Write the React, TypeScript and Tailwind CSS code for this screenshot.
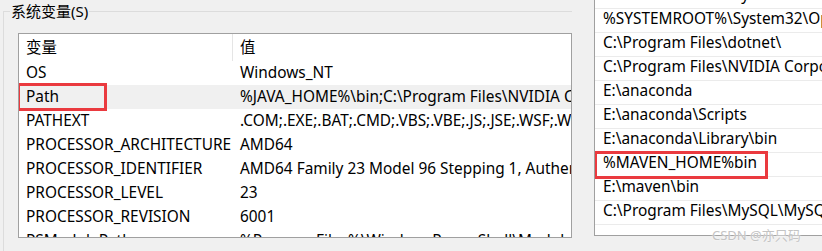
const sysVars: [string, string][] = [
  ['OS', 'Windows_NT'],
  ['Path', '%JAVA_HOME%\\bin;C:\\Program Files\\NVIDIA Corporation\\NVIDIA NvDLISR;%SYSTEMROOT%'],
  ['PATHEXT', '.COM;.EXE;.BAT;.CMD;.VBS;.VBE;.JS;.JSE;.WSF;.WSH;.MSC'],
  ['PROCESSOR_ARCHITECTURE', 'AMD64'],
  ['PROCESSOR_IDENTIFIER', 'AMD64 Family 23 Model 96 Stepping 1, AuthenticAMD'],
  ['PROCESSOR_LEVEL', '23'],
  ['PROCESSOR_REVISION', '6001'],
  ['PSModulePath', '%ProgramFiles%\\WindowsPowerShell\\Modules;%SystemRoot%\\system32'],
];

const pathEntries = [
  '%SYSTEMROOT%\\System32\\WindowsPowerShell\\v1.0\\',
  '%SYSTEMROOT%\\System32\\OpenSSH\\',
  'C:\\Program Files\\dotnet\\',
  'C:\\Program Files\\NVIDIA Corporation\\NVIDIA NvDLISR',
  'E:\\anaconda',
  'E:\\anaconda\\Scripts',
  'E:\\anaconda\\Library\\bin',
  '%MAVEN_HOME%bin',
  'E:\\maven\\bin',
  'C:\\Program Files\\MySQL\\MySQL Server 8.0\\bin',
  '',
];

export default function App() {
  return (
    <div className="relative flex w-[822px] h-[251px] overflow-hidden bg-[#f0f0f0] text-[15.4px] text-black font-['Noto_Sans','Noto_Sans_CJK_SC',sans-serif]">
      {/* system variables dialog */}
      <div className="w-[572px] shrink-0 overflow-hidden pl-[3px]">
        <fieldset className="w-[620px] h-[300px] border border-[#dcdcdc] pl-[6px]">
          <legend className="px-[1px] leading-[22px] text-[15px]">系统变量(S)</legend>
          <div className="mt-[11px] ml-[8px] w-[554px] h-[205px] overflow-hidden border border-[#a0a0a0] bg-white">
            <div className="flex h-[27px] leading-[28px]">
              <div className="w-[214px] shrink-0 pl-[7px] border-r border-[#e5e5e5]">变量</div>
              <div className="pl-[7px]">值</div>
            </div>
            {sysVars.map(([name, value]) => (
              <div
                key={name}
                className={`relative flex h-[24px] leading-[24px] whitespace-nowrap ${name === 'Path' ? 'bg-[#f0f0f0]' : ''}`}
              >
                <div className="w-[214px] shrink-0 overflow-hidden pl-[7px]">{name}</div>
                <div className="pl-[7px]">{value}</div>
                {name === 'Path' && (
                  <div className="absolute left-[-2px] top-[-2px] w-[90px] h-[28px] border-[3px] border-[#ea3a3f]" />
                )}
              </div>
            ))}
          </div>
        </fieldset>
      </div>

      {/* edit path dialog */}
      <div className="flex-1 pl-[22px]">
        <div className="w-[270px] h-[236px] overflow-hidden border-l border-b border-[#a0a0a0] bg-white">
          <div className="-mt-[15px]">
            {pathEntries.map((p, i) => (
              <div
                key={i}
                className="relative h-[24px] leading-[20px] whitespace-nowrap pl-[8px] border-b border-[#ebebeb]"
              >
                {p}
                {p === '%MAVEN_HOME%bin' && (
                  <div className="absolute left-[-1px] top-[-2px] w-[174px] h-[28px] border-[3px] border-[#ea3a3f]" />
                )}
              </div>
            ))}
          </div>
        </div>
      </div>

      <div className="absolute left-[712px] top-[225px] text-[13px] leading-[20px] text-[#c4c4c4] [text-shadow:0_0_2px_#fff]">
        CSDN @亦只码
      </div>
    </div>
  );
}
